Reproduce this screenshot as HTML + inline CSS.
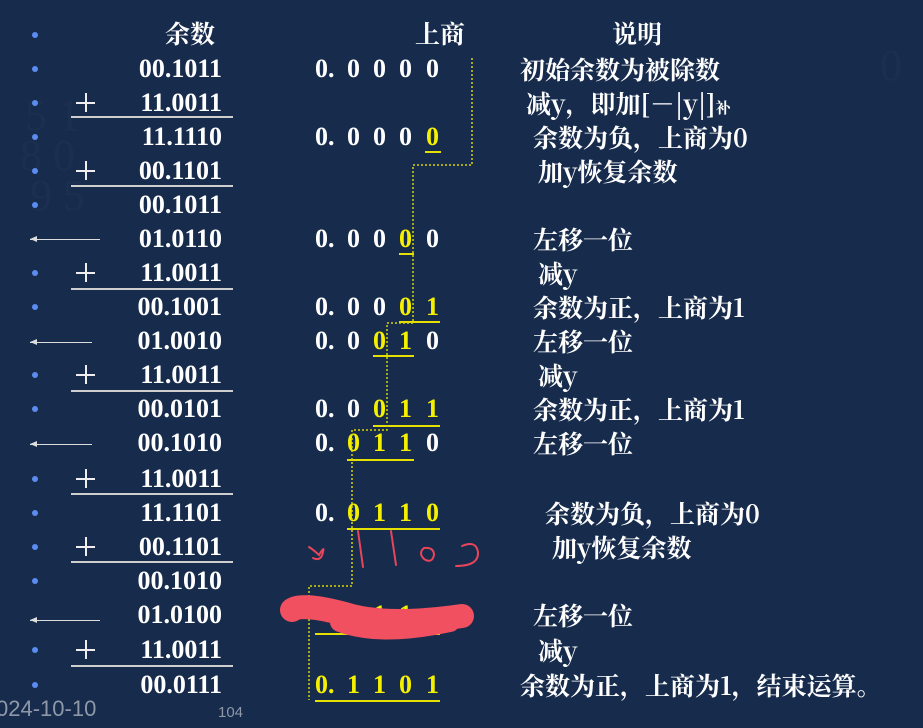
<!DOCTYPE html>
<html><head><meta charset="utf-8"><style>
body{margin:0;width:923px;height:728px;overflow:hidden;background:#172b4c;position:relative;font-family:"Liberation Serif","Noto Serif CJK SC",serif;font-weight:bold;color:#fff}
.a{position:absolute;white-space:nowrap}
.dot{position:absolute;left:32px;width:6px;height:6px;border-radius:50%;background:#5b8df0}
.r{position:absolute;right:701px;font-size:26px;line-height:26px}
.cn{position:absolute;font-size:25px;line-height:26px;font-family:"Noto Serif CJK SC","Liberation Serif",serif;font-weight:bold;white-space:nowrap}
.q{position:absolute;font-size:26px;line-height:26px}
.y{color:#f5f000}
.hl{position:absolute;height:2px;background:#cfcfcf}
.yl{position:absolute;height:2px;background:#e6e000}
.bg{position:absolute;color:rgba(255,255,255,0.025);font-size:44px;font-family:"Liberation Serif",serif;font-weight:normal}
.plus{position:absolute;left:76px;width:19px;height:19px}
.plus:before{content:"";position:absolute;left:0;right:0;top:9px;height:1.5px;background:#eee}
.plus:after{content:"";position:absolute;top:0;bottom:0;left:9px;width:1.5px;background:#eee}
.arr{position:absolute;left:30px;height:1px;background:#ddd}
.arr:before{content:"";position:absolute;left:0;top:-3px;border-right:7px solid #ddd;border-top:3.5px solid transparent;border-bottom:3.5px solid transparent}
</style></head><body>
<div class="bg" style="left:25px;top:90px">5 1</div><div class="bg" style="left:20px;top:130px">8 0</div>
<div class="bg" style="left:30px;top:170px">9 5</div>
<div class="bg" style="left:880px;top:40px">0</div>

<div class="cn" style="left:165px;top:20px">余数</div>
<div class="cn" style="left:415px;top:20px">上商</div>
<div class="cn" style="left:612px;top:20px">说明</div>

<div class="dot" style="top:32px"></div><div class="dot" style="top:66px"></div><div class="dot" style="top:100px"></div><div class="dot" style="top:134px"></div><div class="dot" style="top:168px"></div><div class="dot" style="top:202px"></div><div class="dot" style="top:270px"></div><div class="dot" style="top:304px"></div><div class="dot" style="top:372px"></div><div class="dot" style="top:406px"></div><div class="dot" style="top:476px"></div><div class="dot" style="top:510px"></div><div class="dot" style="top:544px"></div><div class="dot" style="top:578px"></div><div class="dot" style="top:647px"></div><div class="dot" style="top:682px"></div>

<div class="r" style="top:56px">00.1011</div>
<div class="r" style="top:90px">11.0011</div>
<div class="r" style="top:124px">11.1110</div>
<div class="r" style="top:158px">00.1101</div>
<div class="r" style="top:192px">00.1011</div>
<div class="r" style="top:226px">01.0110</div>
<div class="r" style="top:260px">11.0011</div>
<div class="r" style="top:294px">00.1001</div>
<div class="r" style="top:328px">01.0010</div>
<div class="r" style="top:362px">11.0011</div>
<div class="r" style="top:396px">00.0101</div>
<div class="r" style="top:430px">00.1010</div>
<div class="r" style="top:466px">11.0011</div>
<div class="r" style="top:500px">11.1101</div>
<div class="r" style="top:534px">00.1101</div>
<div class="r" style="top:568px">00.1010</div>
<div class="r" style="top:602px">01.0100</div>
<div class="r" style="top:637px">11.0011</div>
<div class="r" style="top:672px">00.0111</div>

<div class="plus" style="top:93px"></div><div class="plus" style="top:161px"></div><div class="plus" style="top:263px"></div><div class="plus" style="top:365px"></div><div class="plus" style="top:469px"></div><div class="plus" style="top:537px"></div><div class="plus" style="top:640px"></div>
<div class="hl" style="left:71px;width:162px;top:116px"></div>
<div class="hl" style="left:71px;width:162px;top:185px"></div>
<div class="hl" style="left:71px;width:162px;top:288px"></div>
<div class="hl" style="left:71px;width:162px;top:390px"></div>
<div class="hl" style="left:71px;width:162px;top:493px"></div>
<div class="hl" style="left:71px;width:162px;top:561px"></div>
<div class="hl" style="left:71px;width:162px;top:665px"></div>
<div class="arr" style="top:239px;width:70px"></div>
<div class="arr" style="top:342px;width:62px"></div>
<div class="arr" style="top:444px;width:62px"></div>
<div class="arr" style="top:620px;width:70px"></div>

<div class="q" style="left:315px;top:56px">0.</div><div class="q" style="left:347px;top:56px">0</div><div class="q" style="left:373px;top:56px">0</div><div class="q" style="left:399px;top:56px">0</div><div class="q" style="left:426px;top:56px">0</div>
<div class="q" style="left:315px;top:124px">0.</div><div class="q" style="left:347px;top:124px">0</div><div class="q" style="left:373px;top:124px">0</div><div class="q" style="left:399px;top:124px">0</div><div class="q y" style="left:426px;top:124px">0</div>
<div class="yl" style="left:425px;width:16px;top:151px"></div>
<div class="q" style="left:315px;top:226px">0.</div><div class="q" style="left:347px;top:226px">0</div><div class="q" style="left:373px;top:226px">0</div><div class="q y" style="left:399px;top:226px">0</div><div class="q" style="left:426px;top:226px">0</div>
<div class="yl" style="left:399px;width:15px;top:253px"></div>
<div class="q" style="left:315px;top:294px">0.</div><div class="q" style="left:347px;top:294px">0</div><div class="q" style="left:373px;top:294px">0</div><div class="q y" style="left:399px;top:294px">0</div><div class="q y" style="left:426px;top:294px">1</div>
<div class="yl" style="left:399px;width:41px;top:321px"></div>
<div class="q" style="left:315px;top:328px">0.</div><div class="q" style="left:347px;top:328px">0</div><div class="q y" style="left:373px;top:328px">0</div><div class="q y" style="left:399px;top:328px">1</div><div class="q" style="left:426px;top:328px">0</div>
<div class="yl" style="left:373px;width:41px;top:355px"></div>
<div class="q" style="left:315px;top:396px">0.</div><div class="q" style="left:347px;top:396px">0</div><div class="q y" style="left:373px;top:396px">0</div><div class="q y" style="left:399px;top:396px">1</div><div class="q y" style="left:426px;top:396px">1</div>
<div class="yl" style="left:373px;width:67px;top:425px"></div>
<div class="q" style="left:315px;top:430px">0.</div><div class="q y" style="left:347px;top:430px">0</div><div class="q y" style="left:373px;top:430px">1</div><div class="q y" style="left:399px;top:430px">1</div><div class="q" style="left:426px;top:430px">0</div>
<div class="yl" style="left:347px;width:67px;top:459px"></div>
<div class="q" style="left:315px;top:500px">0.</div><div class="q y" style="left:347px;top:500px">0</div><div class="q y" style="left:373px;top:500px">1</div><div class="q y" style="left:399px;top:500px">1</div><div class="q y" style="left:426px;top:500px">0</div>
<div class="yl" style="left:347px;width:93px;top:528px"></div>
<div class="q y" style="left:347px;top:602px">0</div><div class="q y" style="left:373px;top:602px">1</div><div class="q y" style="left:399px;top:602px">1</div>
<div class="yl" style="left:315px;width:125px;top:633px"></div>
<div class="q y" style="left:315px;top:672px">0.</div><div class="q y" style="left:347px;top:672px">1</div><div class="q y" style="left:373px;top:672px">1</div><div class="q y" style="left:399px;top:672px">0</div><div class="q y" style="left:426px;top:672px">1</div>
<div class="yl" style="left:315px;width:125px;top:700px"></div>

<svg class="a" style="left:0;top:0" width="923" height="728">
<path d="M472 58V165H413V323H387V430H352V586H309V700" fill="none" stroke="#d8d400" stroke-width="1.5" stroke-dasharray="2 2"/>
<g fill="none" stroke="#e8455a" stroke-width="2" stroke-linecap="round">
<path d="M309 547q6 4 10 8q6-10 4-3q-2 10-10 6"/>
<path d="M358 531l5 36"/><path d="M391 531l5 34"/>
<path d="M424 548q-6 5 0 11q8 5 10-4q0-8-10-7"/>
<path d="M462 546q14-6 16 6q1 14-22 14"/>
</g>
<path d="M292 610q10 -8 60 6q40 10 110 0" stroke="#f0505f" stroke-width="24" fill="none" stroke-linecap="round"/>
<path d="M340 622q40 15 110 0" stroke="#f0505f" stroke-width="20" fill="none" stroke-linecap="round"/>
</svg>

<div class="cn" style="left:520px;top:56px">初始余数为被除数</div>
<div class="cn" style="left:526px;top:90px">减y，即加[－|y|]<span style="font-size:15px">补</span></div>
<div class="cn" style="left:533px;top:124px">余数为负，上商为0</div>
<div class="cn" style="left:538px;top:158px">加y恢复余数</div>
<div class="cn" style="left:533px;top:226px">左移一位</div>
<div class="cn" style="left:538px;top:260px">减y</div>
<div class="cn" style="left:533px;top:294px">余数为正，上商为1</div>
<div class="cn" style="left:533px;top:328px">左移一位</div>
<div class="cn" style="left:538px;top:362px">减y</div>
<div class="cn" style="left:533px;top:396px">余数为正，上商为1</div>
<div class="cn" style="left:533px;top:430px">左移一位</div>
<div class="cn" style="left:545px;top:500px">余数为负，上商为0</div>
<div class="cn" style="left:552px;top:534px">加y恢复余数</div>
<div class="cn" style="left:533px;top:602px">左移一位</div>
<div class="cn" style="left:538px;top:637px">减y</div>
<div class="cn" style="left:520px;top:672px">余数为正，上商为1，结束运算。</div>

<div class="a" style="left:-4px;top:696px;font-size:22px;font-weight:normal;color:#8e98a8;font-family:'Liberation Sans',sans-serif">024-10-10</div>
<div class="a" style="left:218px;top:704px;font-size:15px;font-weight:normal;color:#8e98a8;font-family:'Liberation Sans',sans-serif">104</div>
</body></html>
